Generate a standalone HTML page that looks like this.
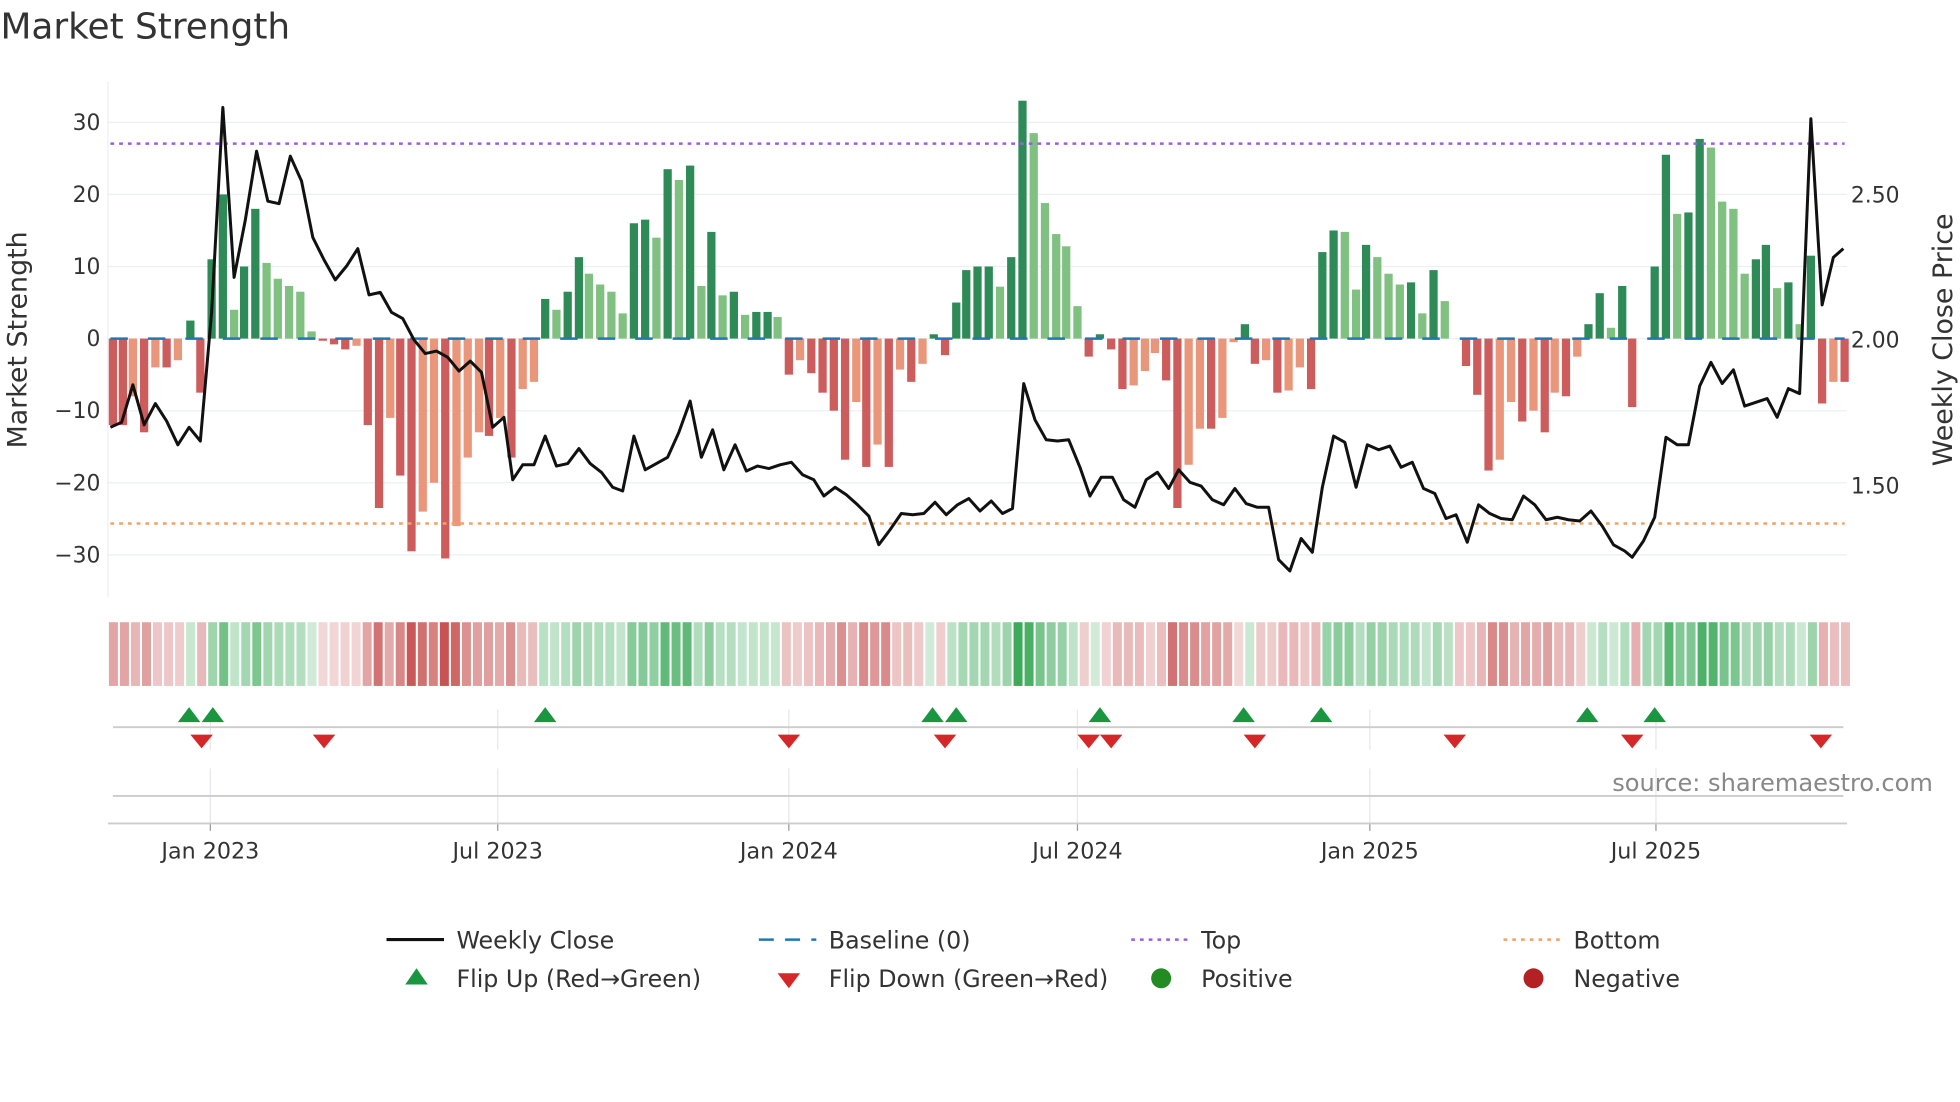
<!DOCTYPE html>
<html><head><meta charset="utf-8"><style>
html,body{margin:0;padding:0;background:#fff;}
svg{display:block;font-family:"DejaVu Sans","Liberation Sans",sans-serif;}
</style></head><body>
<svg id="s" width="1960" height="1102" viewBox="0 0 1568 882" xmlns="http://www.w3.org/2000/svg">
<rect width="1568" height="882" fill="#fff"/>
<text x="0" y="31" font-size="28.7" fill="#333">Market Strength</text>
<g id="grid"></g>
<g id="bars"></g>
<g id="heat"></g>
<g id="marks"></g>
<g id="lines"></g>
<text x="1290" y="633" font-size="19.3" fill="#888">source: sharemaestro.com</text>
<text transform="translate(21,272) rotate(-90)" font-size="21.5" fill="#333" text-anchor="middle">Market Strength</text>
<text transform="translate(1562,272) rotate(-90)" font-size="21.5" fill="#333" text-anchor="middle">Weekly Close Price</text>
<g font-size="19" fill="#333">
<line x1="309" y1="752" x2="355" y2="752" stroke="#111" stroke-width="2.5"/><text x="365" y="759">Weekly Close</text>
<line x1="607" y1="752" x2="653" y2="752" stroke="#1f77b4" stroke-width="2" stroke-dasharray="12 9"/><text x="663" y="759">Baseline (0)</text>
<line x1="905" y1="752" x2="951" y2="752" stroke="#9b5de5" stroke-width="2" stroke-dasharray="3 4"/><text x="961" y="759">Top</text>
<line x1="1203" y1="752" x2="1249" y2="752" stroke="#f4a261" stroke-width="2" stroke-dasharray="3 4"/><text x="1259" y="759">Bottom</text>
<polygon points="324,788 333,775 342,788" fill="#1a9641"/><text x="365" y="790">Flip Up (Red→Green)</text>
<polygon points="622,779 640,779 631,791" fill="#d62728"/><text x="663" y="790">Flip Down (Green→Red)</text>
<circle cx="929" cy="783" r="8" fill="#228b22"/><text x="961" y="790">Positive</text>
<circle cx="1227" cy="783" r="8" fill="#b22222"/><text x="1259" y="790">Negative</text>
</g>
</svg>
<script>
var NS="http://www.w3.org/2000/svg";
function el(p,t,a,txt){var e=document.createElementNS(NS,t);for(var k in a)e.setAttribute(k,a[k]);if(txt!==undefined)e.textContent=txt;document.getElementById(p).appendChild(e);return e;}
var Y0=271,K=5.77;
[30,20,10,0,-10,-20,-30].forEach(function(v){var y=Y0-v*K;el("grid","line",{x1:86,x2:1478,y1:y,y2:y,stroke:"#eceff4","stroke-width":1});
el("grid","text",{x:80,y:y+6,"font-size":17.5,fill:"#333","text-anchor":"end"},(v<0?"\u2212"+(-v):v));});
el("grid","line",{x1:86,x2:86,y1:65,y2:478,stroke:"#eceff4"});
[[2.5,156],[2.0,272],[1.5,389]].forEach(function(p){el("grid","text",{x:1481,y:p[1]+6,"font-size":17.5,fill:"#333"},p[0].toFixed(2));});
var ticks=[[168,"Jan 2023"],[398,"Jul 2023"],[631,"Jan 2024"],[862,"Jul 2024"],[1096,"Jan 2025"],[1325,"Jul 2025"]];
ticks.forEach(function(t){el("grid","line",{x1:t[0],x2:t[0],y1:568,y2:600,stroke:"#e6e8ee"});el("grid","line",{x1:t[0],x2:t[0],y1:615,y2:659,stroke:"#e6e8ee"});
el("grid","line",{x1:t[0],x2:t[0],y1:659,y2:665,stroke:"#999"});el("grid","text",{x:t[0],y:687,"font-size":17.8,fill:"#333","text-anchor":"middle"},t[1]);});
el("grid","line",{x1:90,x2:1475,y1:582,y2:582,stroke:"#ccc","stroke-width":1.5});
el("grid","line",{x1:90,x2:1475,y1:637,y2:637,stroke:"#ccc","stroke-width":1.5});
el("grid","line",{x1:86,x2:1478,y1:659,y2:659,stroke:"#ccc","stroke-width":1.5});
var B=[[90,-12],[98,-12],[106,-8],[115,-13],[124,-4],[133,-4],[142,-3],[152,2.5],[160,-7.5],[169,11],[178,20],[187,4],[195,10],[204,18],[213,10.5],[222,8.3],[231,7.3],[240,6.5],[249,1],[258,-0.3],[267,-0.8],[276,-1.5],[285,-1],[294,-12],[303,-23.5],[312,-11],[320,-19],[329,-29.5],[338,-24],[347,-20],[356,-30.5],[365,-26],[374,-16.5],[383,-13],[391,-13.5],[400,-11],[409,-16.5],[418,-7],[427,-6],[436,5.5],[445,4],[454,6.5],[463,11.3],[471,9],[480,7.5],[489,6.5],[498,3.5],[507,16],[516,16.5],[525,14],[534,23.5],[543,22],[552,24],[561,7.3],[569,14.8],[578,6],[587,6.5],[596,3.3],[605,3.7],[614,3.7],[622,3],[631,-5],[640,-3],[649,-4.8],[658,-7.5],[667,-10],[676,-16.8],[685,-8.8],[693,-17.8],[702,-14.7],[711,-17.8],[720,-4.3],[729,-6],[738,-3.5],[747,0.6],[756,-2.3],[765,5],[773,9.5],[782,10],[791,10],[800,7.2],[809,11.3],[818,33],[827,28.5],[836,18.8],[845,14.5],[853,12.8],[862,4.5],[871,-2.5],[880,0.6],[889,-1.5],[898,-7],[907,-6.5],[916,-4.5],[924,-2],[933,-5.8],[942,-23.5],[951,-17.5],[960,-12.5],[969,-12.5],[978,-11],[987,-0.5],[996,2],[1004,-3.5],[1013,-3],[1022,-7.5],[1031,-7.2],[1040,-4],[1049,-7],[1058,12],[1067,15],[1076,14.8],[1085,6.8],[1093,13],[1102,11.3],[1111,9],[1120,7.5],[1129,7.8],[1138,3.5],[1147,9.5],[1156,5.2],[1173,-3.8],[1182,-7.8],[1191,-18.3],[1200,-16.8],[1209,-8.8],[1218,-11.5],[1227,-10],[1236,-13],[1244,-7.5],[1253,-8],[1262,-2.5],[1271,2],[1280,6.3],[1289,1.5],[1298,7.3],[1306,-9.5],[1324,10],[1333,25.5],[1342,17.3],[1351,17.5],[1360,27.7],[1369,26.5],[1378,19],[1387,18],[1396,9],[1405,11],[1413,13],[1422,7],[1431,7.8],[1440,2],[1449,11.5],[1458,-9],[1467,-6],[1476,-6]];
var prev=0;
B.forEach(function(b){var v=b[1],inc=Math.abs(v)>=Math.abs(prev)||(v*prev<0);var c=v>=0?(inc?"#2e8b57":"#80c080"):(inc?"#cd5c5c":"#e9967a");
var y=v>=0?Y0-v*K:Y0,h=Math.abs(v)*K;el("bars","rect",{x:b[0]-3.3,y:y,width:6.6,height:Math.max(h,1),fill:c});prev=v;});
for(var i=0;i<158;i++){var x=86+i*8.83;var best=B[0],bd=1e9;B.forEach(function(b){var d=Math.abs(b[0]-x-4);if(d<bd){bd=d;best=b;}});
var v=best[1],a=Math.min(1,0.22+Math.abs(v)/40);var col=v>=0?"rgba(60,170,90,"+a+")":"rgba(200,80,80,"+a+")";
el("heat","rect",{x:x+0.8,y:498,width:7.2,height:51,fill:col});}
[151,170,436,746,765,880,995,1057,1270,1324].forEach(function(x){el("marks","polygon",{points:(x-9)+",578 "+x+",566 "+(x+9)+",578",fill:"#1a9641"});});
[161,259,631,756,871,889,1004,1164,1306,1457].forEach(function(x){el("marks","polygon",{points:(x-9)+",588 "+(x+9)+",588 "+x+",599",fill:"#d62728"});});
el("lines","line",{x1:88,x2:1476,y1:Y0,y2:Y0,stroke:"#1f77b4","stroke-width":2,"stroke-dasharray":"14 16"});
el("lines","line",{x1:88,x2:1476,y1:115,y2:115,stroke:"#9b5de5","stroke-width":2,"stroke-dasharray":"3 4"});
el("lines","line",{x1:88,x2:1476,y1:419,y2:419,stroke:"#f4a261","stroke-width":2,"stroke-dasharray":"3 4"});
var P="88,342 97,338 106,308 115,340 124,323 133,337 142,356 151,342 160,353 169,250 178,86 187,222 196,176 205,121 214,161 223,163 232,125 241,145 250,190 259,208 268,224 277,213 286,199 295,236 304,234 313,250 322,255 331,272 340,283 349,281 358,286 367,297 376,289 385,298 394,342 403,334 410,384 418,372 427,372 436,349 445,373 454,371 463,359 472,371 481,378 490,390 498,393 507,349 516,376 525,371 534,366 543,346 552,321 561,366 570,344 579,376 588,356 597,377 606,373 615,375 624,372 633,370 642,380 651,384 659,397 668,390 677,396 686,404 695,413 703,436 712,424 721,411 730,412 739,411 748,402 757,412 766,404 775,399 784,409 793,401 802,411 810,407 819,307 828,336 837,352 846,353 855,352 864,374 872,397 881,382 890,382 899,400 908,406 917,384 926,378 935,391 943,376 952,386 961,389 970,400 979,404 988,391 997,403 1006,406 1015,406 1023,448 1032,457 1041,431 1050,442 1058,390 1067,349 1076,354 1085,390 1094,356 1103,360 1112,357 1121,374 1130,370 1139,391 1148,395 1157,415 1165,412 1174,434 1183,404 1192,411 1201,415 1210,416 1219,397 1228,404 1237,416 1246,414 1255,416 1264,417 1273,409 1282,421 1291,436 1300,441 1306,446 1315,433 1324,414 1333,350 1342,356 1351,356 1360,309 1369,290 1378,307 1387,296 1396,325 1405,322 1414,319 1422,334 1431,311 1440,315 1449,95 1458,244 1467,206 1475,199";
el("lines","polyline",{points:P,fill:"none",stroke:"#111","stroke-width":2.4,"stroke-linejoin":"round"});
</script>
</body></html>
